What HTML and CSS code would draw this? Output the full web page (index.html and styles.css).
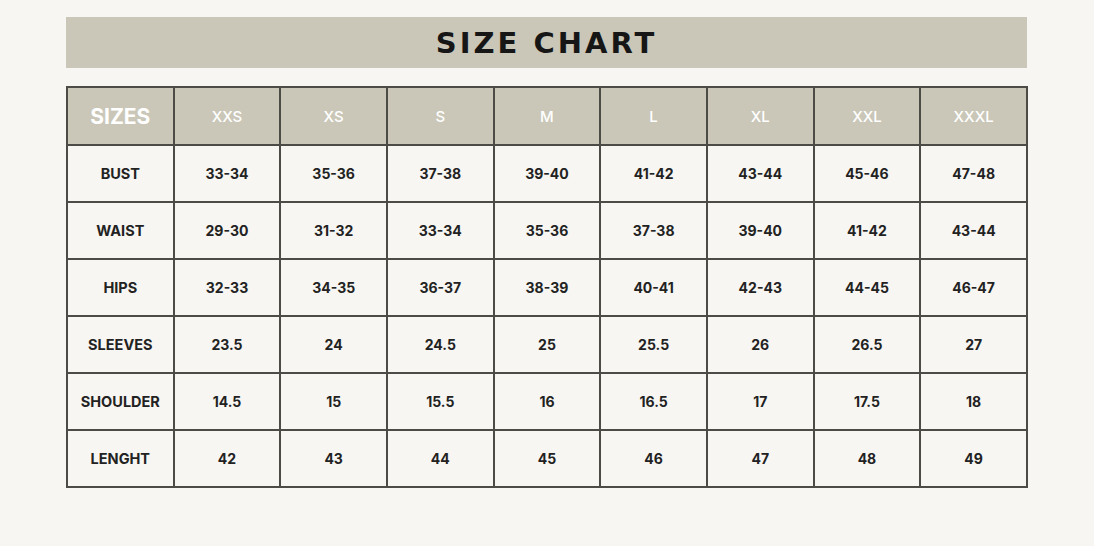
FILE: index.html
```html
<!DOCTYPE html>
<html>
<head>
<meta charset="utf-8">
<link rel="stylesheet" href="styles.css">
</head>
<body>
<div class="page">
  <div class="banner"><h1 class="title">SIZE CHART</h1></div>
  <table class="chart">
    <thead>
      <tr class="head">
        <th class="first">SIZES</th><th>XXS</th><th>XS</th><th>S</th><th>M</th><th>L</th><th>XL</th><th>XXL</th><th>XXXL</th>
      </tr>
    </thead>
    <tbody>
      <tr><td class="label">BUST</td><td>33-34</td><td>35-36</td><td>37-38</td><td>39-40</td><td>41-42</td><td>43-44</td><td>45-46</td><td>47-48</td></tr>
      <tr><td class="label">WAIST</td><td>29-30</td><td>31-32</td><td>33-34</td><td>35-36</td><td>37-38</td><td>39-40</td><td>41-42</td><td>43-44</td></tr>
      <tr><td class="label">HIPS</td><td>32-33</td><td>34-35</td><td>36-37</td><td>38-39</td><td>40-41</td><td>42-43</td><td>44-45</td><td>46-47</td></tr>
      <tr><td class="label">SLEEVES</td><td>23.5</td><td>24</td><td>24.5</td><td>25</td><td>25.5</td><td>26</td><td>26.5</td><td>27</td></tr>
      <tr><td class="label">SHOULDER</td><td>14.5</td><td>15</td><td>15.5</td><td>16</td><td>16.5</td><td>17</td><td>17.5</td><td>18</td></tr>
      <tr><td class="label">LENGHT</td><td>42</td><td>43</td><td>44</td><td>45</td><td>46</td><td>47</td><td>48</td><td>49</td></tr>
    </tbody>
  </table>
</div>
</body>
</html>
```
FILE: styles.css
```css
html, body {
  margin: 0;
  padding: 0;
  background: #f7f6f2;
}
.page {
  width: 1094px;
  height: 546px;
  padding: 17px 0 0 66px;
  box-sizing: border-box;
  font-family: Inter, "Open Sans", "Liberation Sans", sans-serif;
}
.banner {
  width: 961px;
  height: 51px;
  background: #cac7b8;
  display: flex;
  align-items: center;
  justify-content: center;
}
.title {
  margin: 0;
  font-family: "DejaVu Sans", sans-serif;
  font-weight: 700;
  font-size: 29px;
  letter-spacing: 3px;
  color: #161616;
}
.chart {
  margin-top: 18px;
  width: 962px;
  border-collapse: collapse;
  table-layout: fixed;
}
.chart th, .chart td {
  border: 2px solid #4d4b45;
  text-align: center;
  padding: 0;
}
.head th {
  height: 56px;
  background: #cac7b8;
  color: #ffffff;
  font-size: 15px;
  font-weight: 500;
}
.head th.first {
  font-size: 21px;
  font-weight: 700;
}
.chart td {
  height: 55px;
  font-size: 14px;
  font-weight: 700;
  color: #222222;
}
.chart td.label {
  font-size: 14.5px;
}
```
